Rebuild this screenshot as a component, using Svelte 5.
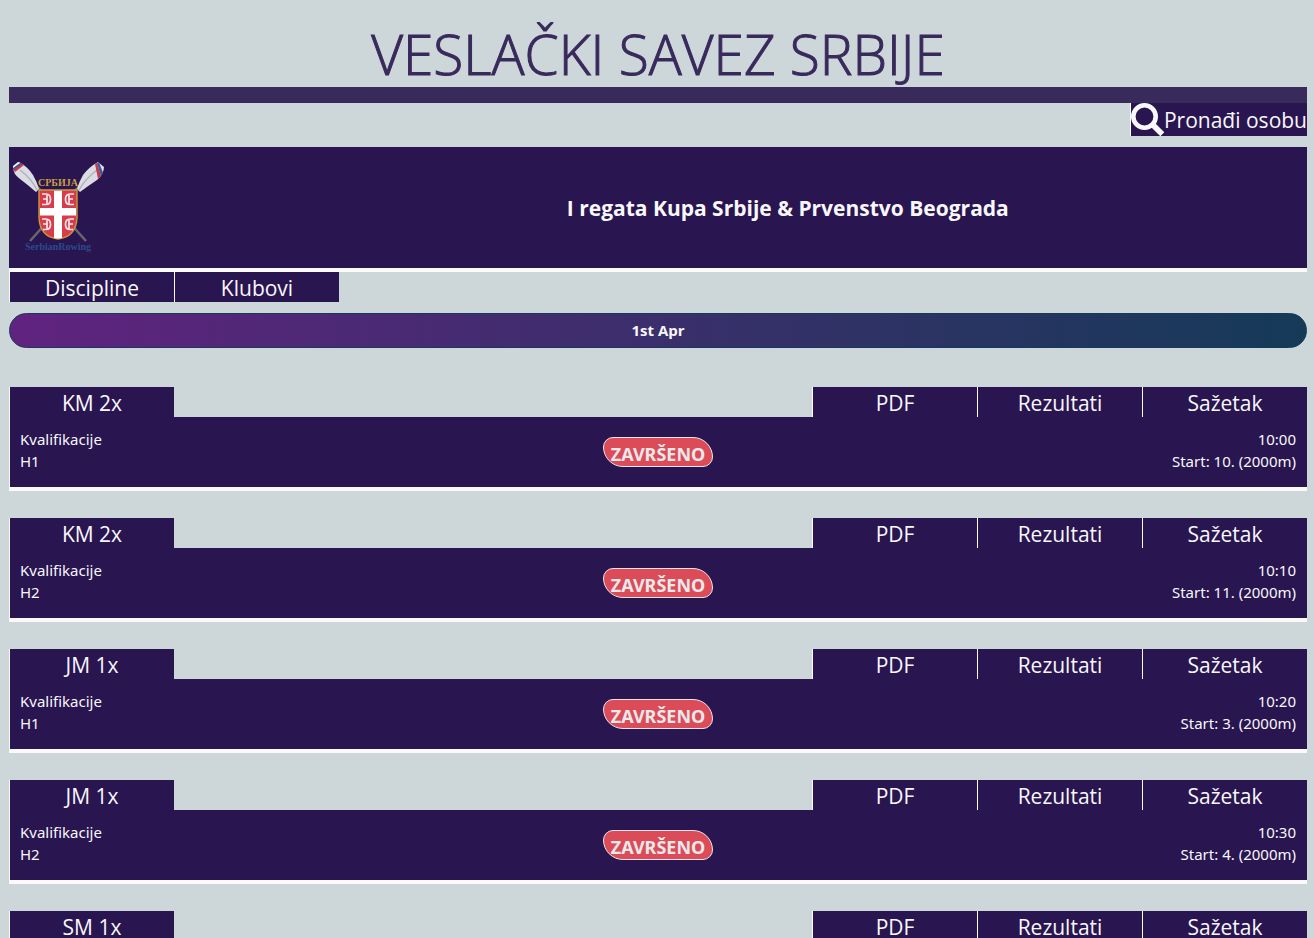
<script>
  let day = "1st Apr";

  let races = [
    { event: "KM 2x", phase: "Kvalifikacije", heat: "H1", time: "10:00", start: "Start: 10. (2000m)" },
    { event: "KM 2x", phase: "Kvalifikacije", heat: "H2", time: "10:10", start: "Start: 11. (2000m)" },
    { event: "JM 1x", phase: "Kvalifikacije", heat: "H1", time: "10:20", start: "Start: 3. (2000m)" },
    { event: "JM 1x", phase: "Kvalifikacije", heat: "H2", time: "10:30", start: "Start: 4. (2000m)" },
    { event: "SM 1x", phase: "Kvalifikacije", heat: "H1", time: "10:40", start: "Start: 5. (2000m)" },
  ];
</script>

<main>
  <h1>VESLAČKI SAVEZ SRBIJE</h1>
  <div class="bar"></div>

  <div class="search">
    <button class="find">
      <svg width="33" height="33" viewBox="0 0 33 33" aria-hidden="true">
        <circle cx="13.5" cy="13.5" r="11.2" fill="none" stroke="#f8f8fa" stroke-width="4.6" />
        <path d="M21 21l10.300 10.300" fill="none" stroke="#f8f8fa" stroke-width="5.6" />
      </svg>
      Pronađi osobu
    </button>
  </div>

  <header>
    <div class="logo">
      <svg width="96" height="96" viewBox="0 0 96 96" role="img" aria-label="SerbianRowing">
        <!-- oars -->
        <path d="M19 83L70 26M75 83L24 26" stroke="#66666c" stroke-width="2.6" />
        <path d="M2 9L8 4Q17 9 22 17Q26 24 28 31L25 34Q17 27 9 21Q2 16 2 9Z" fill="#dcdde4" />
        <path d="M93 9L87 4Q78 9 72 17Q68 24 66 31L69 34Q77 28 86 22Q93 16 93 9Z" fill="#dcdde4" />
        <path d="M9 12Q20 20 26 32M86 12Q74 21 68 32" fill="none" stroke="#aeb0bc" stroke-width="1.5" />
        <path d="M2 11L10 5L13 7L4 14Z" fill="#c43a4b" />
        <path d="M2 9L9 4.500L11 6L2 12Z" fill="#3a549c" />
        <path d="M2 8L7 4L9 5L2 10Z" fill="#f4f4f8" />
        <path d="M84 6L86 5L90 18L87 21Z" fill="#c43a4b" />
        <path d="M86 5L88 4.500L92 15L90 18Z" fill="#3a549c" />
        <!-- shield -->
        <path d="M28 32H66V60Q65 79 47 81Q29 79 28 60Z" fill="#d83b4c" stroke="#c99a3c" stroke-width="1.4" />
        <path d="M43 32.700H51V80Q47 81 43 80ZM29 50H65V57.500H29Z" fill="#fff" />
        <g fill="none" stroke="#f9e8ea" stroke-width="1.700">
          <path d="M31 36H35Q39.500 36 39.500 41.500Q39.500 46.500 35 46.500H31M32 41H36.500M36 37V46" />
          <path d="M63 36H59Q54.500 36 54.500 41.500Q54.500 46.500 59 46.500H63M62 41H57.500M58 37V46" />
          <path d="M31 61H35Q39.500 61 39.500 66.500Q39.500 71.500 35 71.500H32M32 66H36.500M36 62V71" />
          <path d="M63 61H59Q54.500 61 54.500 66.500Q54.500 71.500 59 71.500H62M62 66H57.500M58 62V71" />
        </g>
        <text class="country" x="47" y="28" text-anchor="middle">СРБИЈА</text>
        <text class="team" x="47" y="92" text-anchor="middle">SerbianRowing</text>
      </svg>
    </div>
    <h2>I regata Kupa Srbije &amp; Prvenstvo Beograda</h2>
  </header>

  <nav>
    <button class="tab">Discipline</button>
    <button class="tab">Klubovi</button>
  </nav>

  <div class="day">{day}</div>

  {#each races as race}
    <section class="race">
      <div class="tabs">
        <button class="tab">{race.event}</button>
        <div class="links">
          <button class="tab">PDF</button>
          <button class="tab">Rezultati</button>
          <button class="tab">Sažetak</button>
        </div>
      </div>
      <div class="info">
        <div class="left">
          <p>{race.phase}</p>
          <p>{race.heat}</p>
        </div>
        <span class="status">ZAVRŠENO</span>
        <div class="right">
          <p>{race.time}</p>
          <p>{race.start}</p>
        </div>
      </div>
    </section>
  {/each}
</main>

<style>
  :global(body) {
    background: #cdd6d9;
    overflow-x: hidden;
  }

  :global(html) {
    scrollbar-width: none;
  }

  main {
    padding: 20px 7px 28px 9px;
    font-family: "Segoe UI", "Open Sans", "Noto Sans", sans-serif;
    font-size: 16px;
    color: #f8f8fa;
  }

  h1 {
    margin: 0;
    font-size: 55px;
    font-weight: 300;
    line-height: 67px;
    text-align: center;
    color: #392a5c;
    -webkit-text-stroke: 1px #392a5c;
  }

  .bar {
    height: 16px;
    background: #392a5c;
  }

  .search {
    display: flex;
    justify-content: flex-end;
    margin-bottom: 11px;
  }

  button {
    font-family: inherit;
    font-size: 21px;
    color: inherit;
    background: #291550;
    border: 0;
    border-left: 1px solid #fafafa;
    padding: 0;
    cursor: pointer;
  }

  .find {
    display: flex;
    align-items: center;
    height: 33px;
    line-height: 32px;
  }

  header {
    display: flex;
    align-items: center;
    height: 121px;
    background: #291550;
    border-bottom: 4px solid #fafafa;
  }

  .logo {
    box-sizing: border-box;
    width: 20%;
    padding-left: 2px;
    padding-bottom: 4px;
  }

  .logo svg {
    display: block;
  }

  .country {
    font: bold 10px "Liberation Serif", serif;
    fill: #c9a043;
  }

  .team {
    font: bold 10px "Liberation Serif", serif;
    fill: #2c4a8c;
  }

  h2 {
    flex: 1;
    margin: 0;
    font-size: 21px;
    font-weight: 700;
    text-align: center;
  }

  nav {
    display: flex;
    margin-bottom: 11px;
  }

  .tab {
    width: 165px;
    height: 30px;
    line-height: 32px;
  }

  .day {
    box-sizing: border-box;
    height: 35px;
    margin-bottom: 39px;
    border: 1px solid #17395a;
    border-radius: 18px;
    background: linear-gradient(to right, #60237f, #153a58);
    font-size: 15px;
    font-weight: 700;
    line-height: 33px;
    text-align: center;
  }

  .race {
    margin-bottom: 27px;
  }

  .tabs {
    display: flex;
    justify-content: space-between;
  }

  .links {
    display: flex;
  }

  .info {
    display: grid;
    grid-template-columns: 1fr auto 1fr;
    align-items: center;
    height: 70px;
    padding: 0 11px 0 10px;
    background: #291550;
    border-left: 1px solid #fafafa;
    border-bottom: 4px solid #fafafa;
    font-family: "Segoe UI", "Noto Sans", sans-serif;
    font-size: 15px;
    line-height: 22px;
  }

  p {
    margin: 0;
  }

  .left,
  .right {
    padding-bottom: 5px;
  }

  .right {
    text-align: right;
  }

  .status {
    box-sizing: border-box;
    width: 110px;
    height: 30px;
    border: 1px solid #e8e8ea;
    border-radius: 10px 20px 10px 20px;
    background: #dc4c58;
    color: #e8e8ea;
    font-size: 18px;
    font-weight: 700;
    line-height: 32px;
    text-align: center;
  }
</style>
